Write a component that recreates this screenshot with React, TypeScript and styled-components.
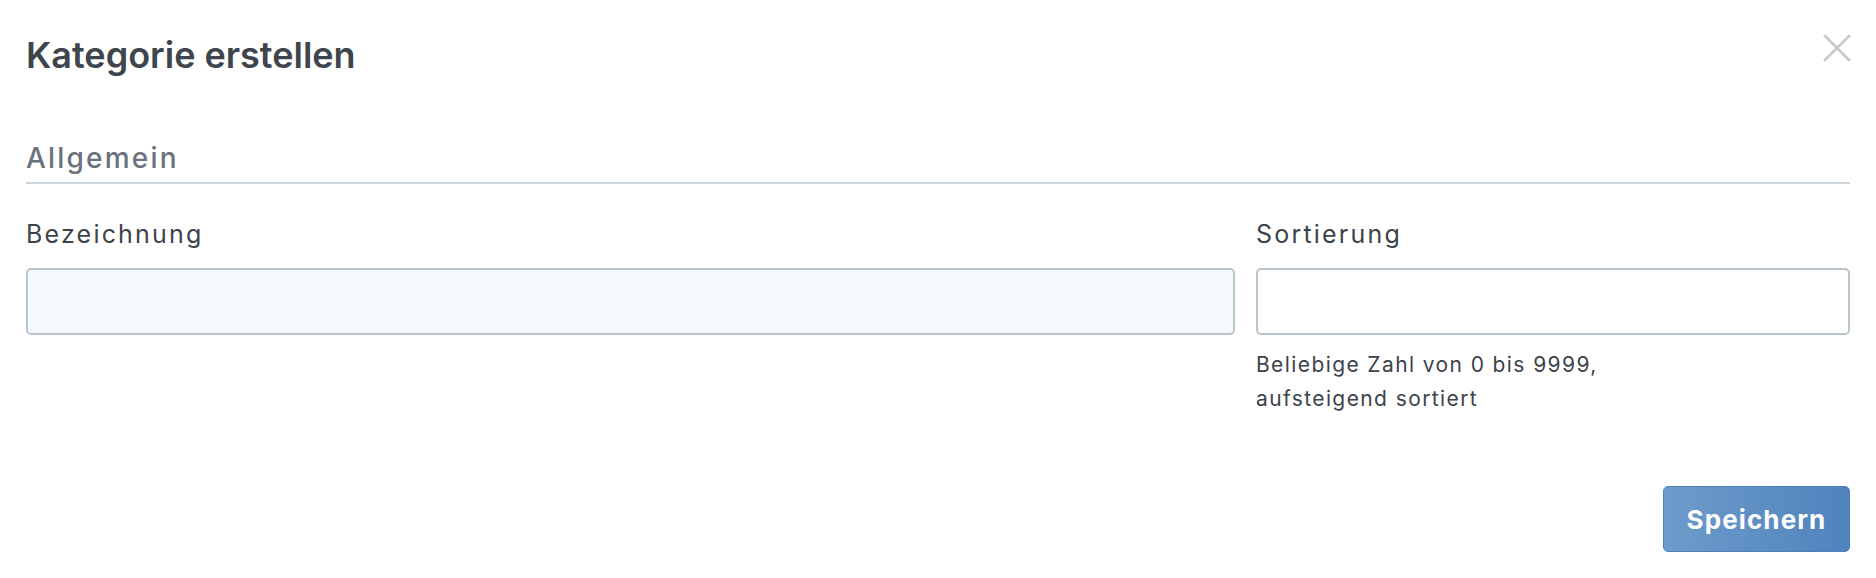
import React from "react";
import styled, { createGlobalStyle } from "styled-components";

const GlobalStyle = createGlobalStyle`
  html, body {
    margin: 0;
    padding: 0;
    background: #ffffff;
  }
  body {
    font-family: Inter, "Noto Sans", sans-serif;
  }
`;

const App = () => {
  return (
    <>
      <GlobalStyle />
      <Modal>
        <Header>
          <Title>Kategorie erstellen</Title>
          <CloseButton aria-label="Schließen">
            <svg width="28" height="28" viewBox="0 0 28 28">
              <path d="M2 2 L26 26 M26 2 L2 26" stroke="#c8c8c8" strokeWidth="2.6" strokeLinecap="square" />
            </svg>
          </CloseButton>
        </Header>

        <Section>
          <SectionTitle>Allgemein</SectionTitle>
          <FormRow>
            <Field>
              <Label>Bezeichnung</Label>
              <Input $filled />
            </Field>
            <Field>
              <Label>Sortierung</Label>
              <Input />
              <Hint>
                Beliebige Zahl von 0 bis 9999,
                <br />
                aufsteigend sortiert
              </Hint>
            </Field>
          </FormRow>
        </Section>

        <Footer>
          <SaveButton>Speichern</SaveButton>
        </Footer>
      </Modal>
    </>
  );
};

export default App;

const Modal = styled.div`
display: flex;
flex-direction: column;
width: 1876px;
height: 578px;
box-sizing: border-box;
padding: 0 26px;
`;

const Header = styled.div`
display: flex;
justify-content: space-between;
align-items: flex-start;
padding-top: 33px;
`;

const Title = styled.h1`
margin: 0;
color: #3e454c;
font-size: 36px;
font-weight: 600;
line-height: 44px;
`;

const CloseButton = styled.button`
display: flex;
align-items: center;
justify-content: center;
width: 28px;
height: 28px;
padding: 0;
margin-top: 1px;
margin-right: -1px;
border: none;
background: transparent;
cursor: pointer;
`;

const Section = styled.div`
display: flex;
flex-direction: column;
`;

const SectionTitle = styled.h2`
margin: 0;
padding: 62px 0 5px;
border-bottom: 2px solid #cfd8df;
color: #6a737d;
font-size: 28px;
font-weight: 500;
line-height: 38px;
letter-spacing: 2.2px;
`;

const FormRow = styled.div`
display: grid;
grid-template-columns: calc((100% + 21px) * 2 / 3 - 21px) 1fr;
gap: 21px;
margin-top: 33px;
`;

const Field = styled.div`
display: flex;
flex-direction: column;
`;

const Label = styled.label`
color: #3c434a;
font-size: 25px;
font-weight: 400;
line-height: 34px;
letter-spacing: 2.2px;
margin-bottom: 17px;
`;

const Input = styled.input<{ $filled?: boolean }>`
box-sizing: border-box;
height: 67px;
width: 100%;
border: 2px solid #b9c5cd;
border-radius: 5px;
background: ${(p) => (p.$filled ? "#f5f8fd" : "#ffffff")};
outline: none;
`;

const Hint = styled.div`
margin-top: 13px;
color: #3c434a;
font-size: 21px;
line-height: 34px;
letter-spacing: 1.4px;
`;

const Footer = styled.div`
display: flex;
justify-content: flex-end;
margin-top: auto;
margin-bottom: 26px;
`;

const SaveButton = styled.button`
width: 187px;
height: 66px;
border: 1px solid #4f80b8;
border-radius: 5px;
background: linear-gradient(90deg, #6d9ccb 0%, #5083bd 100%);
color: #ffffff;
font-family: Inter, "Noto Sans", sans-serif;
font-size: 26px;
font-weight: 700;
letter-spacing: 1.1px;
cursor: pointer;
`;
